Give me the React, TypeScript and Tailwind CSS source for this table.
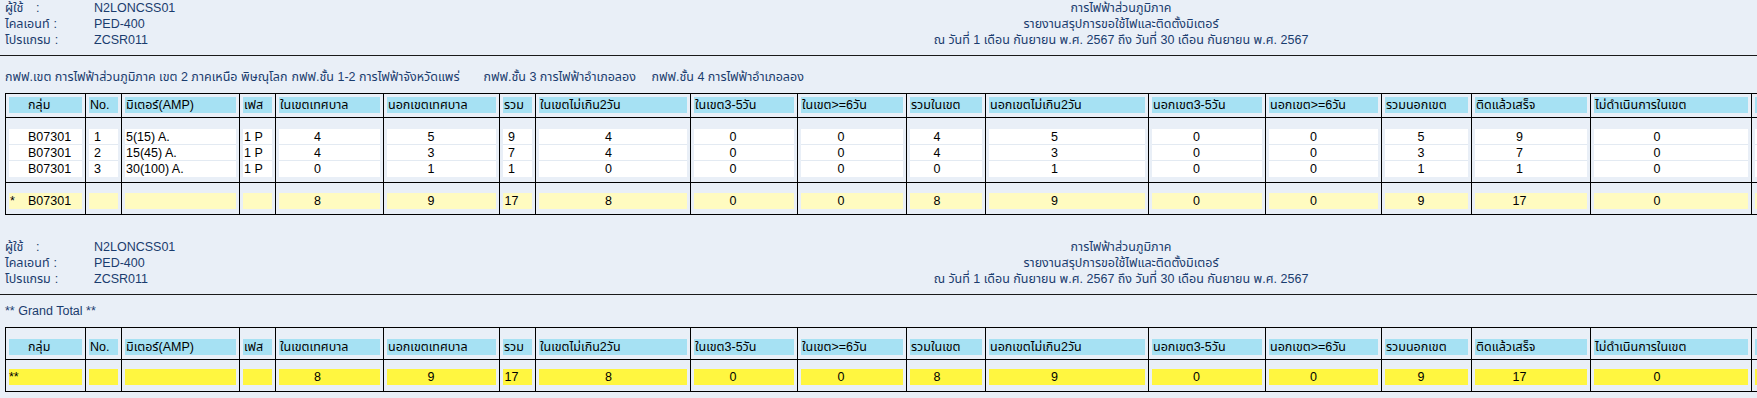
import React from 'react';

type Kind = 'group' | 'no' | 'text' | 'num';
type Col = { label: string; w: string; kind: Kind; nw?: string };

const cols: Col[] = [
  { label: 'กลุ่ม', w: 'w-[80px]', kind: 'group' },
  { label: 'No.', w: 'w-[36px]', kind: 'no' },
  { label: 'มิเตอร์(AMP)', w: 'w-[118px]', kind: 'text' },
  { label: 'เฟส', w: 'w-[36px]', kind: 'text' },
  { label: 'ในเขตเทศบาล', w: 'w-[108px]', kind: 'num', nw: 'w-[77px]' },
  { label: 'นอกเขตเทศบาล', w: 'w-[116px]', kind: 'num', nw: 'w-[88px]' },
  { label: 'รวม', w: 'w-[36px]', kind: 'num', nw: 'w-[17px]' },
  { label: 'ในเขตไม่เกิน2วัน', w: 'w-[155px]', kind: 'num', nw: 'w-[139px]' },
  { label: 'ในเขต3-5วัน', w: 'w-[107px]', kind: 'num', nw: 'w-[78px]' },
  { label: 'ในเขต>=6วัน', w: 'w-[109px]', kind: 'num', nw: 'w-[80px]' },
  { label: 'รวมในเขต', w: 'w-[79px]', kind: 'num', nw: 'w-[54px]' },
  { label: 'นอกเขตไม่เกิน2วัน', w: 'w-[163px]', kind: 'num', nw: 'w-[131px]' },
  { label: 'นอกเขต3-5วัน', w: 'w-[117px]', kind: 'num', nw: 'w-[89px]' },
  { label: 'นอกเขต>=6วัน', w: 'w-[116px]', kind: 'num', nw: 'w-[89px]' },
  { label: 'รวมนอกเขต', w: 'w-[90px]', kind: 'num', nw: 'w-[72px]' },
  { label: 'ติดแล้วเสร็จ', w: 'w-[119px]', kind: 'num', nw: 'w-[89px]' },
  { label: 'ไม่ดำเนินการในเขต', w: 'w-[161px]', kind: 'num', nw: 'w-[126px]' },
  { label: '', w: 'w-[163px]', kind: 'num', nw: 'w-[131px]' },
];

const dataRows: string[][] = [
  ['B07301', '1', '5(15) A.', '1 P', '4', '5', '9', '4', '0', '0', '4', '5', '0', '0', '5', '9', '0', ''],
  ['B07301', '2', '15(45) A.', '1 P', '4', '3', '7', '4', '0', '0', '4', '3', '0', '0', '3', '7', '0', ''],
  ['B07301', '3', '30(100) A.', '1 P', '0', '1', '1', '0', '0', '0', '0', '1', '0', '0', '1', '1', '0', ''],
];
const totalRow = ['* B07301', '', '', '', '8', '9', '17', '8', '0', '0', '8', '9', '0', '0', '9', '17', '0', ''];
const grandRow = ['**', '', '', '', '8', '9', '17', '8', '0', '0', '8', '9', '0', '0', '9', '17', '0', ''];
const headerRow = cols.map((c) => c.label);

function BandContent({ col, value, header }: { col: Col; value: string; header?: boolean }) {
  if (header) {
    return <div className={col.kind === 'group' ? 'pl-[19px]' : 'pl-[1px]'}>{value}</div>;
  }
  if (col.kind === 'group') {
    if (value === '**') return <div className="pl-0">**</div>;
    if (value.startsWith('* ')) {
      return (
        <div className="flex">
          <span className="w-[19px] pl-[1px]">*</span>
          <span>{value.slice(2)}</span>
        </div>
      );
    }
    return <div className="pl-[19px]">{value}</div>;
  }
  if (col.kind === 'no') return <div className="pl-[5px]">{value}</div>;
  if (col.kind === 'text') return <div className="pl-[1px]">{value}</div>;
  return <div className={`${col.nw} text-center`}>{value}</div>;
}

function Section({
  rows,
  bg,
  pad,
  header,
  sep,
}: {
  rows: string[][];
  bg: string;
  pad: string;
  header?: boolean;
  sep?: boolean;
}) {
  return (
    <div className="flex w-max border-b border-black">
      {cols.map((col, ci) => (
        <div key={ci} className={`${col.w} shrink-0 border-l border-black ${pad}`}>
          <div className="mx-[3px] flex flex-col">
            {rows.map((r, ri) => (
              <div
                key={ri}
                className={`h-[16px] whitespace-pre ${bg} ${
                  sep && ri < rows.length - 1 ? 'border-b border-[#e3eaf2]' : ''
                }`}
              >
                <BandContent col={col} value={r[ci]} header={header} />
              </div>
            ))}
          </div>
        </div>
      ))}
    </div>
  );
}

function ReportHeader() {
  const labels: [string, string, string][] = [
    ['ผู้ใช้', 'min-w-[31px]', 'N2LONCSS01'],
    ['ไคลเอนท์', 'min-w-[44px]', 'PED-400'],
    ['โปรแกรม', 'min-w-[46px]', 'ZCSR011'],
  ];
  const titles = [
    'การไฟฟ้าส่วนภูมิภาค',
    'รายงานสรุปการขอใช้ไฟและติดตั้งมิเตอร์',
    'ณ วันที่ 1 เดือน กันยายน พ.ศ. 2567 ถึง วันที่ 30 เดือน กันยายน พ.ศ. 2567',
  ];
  return (
    <div className="flex h-[48px] text-[#1a3c6e]">
      <div className="w-[700px] shrink-0 pl-[5px]">
        {labels.map(([l, lw, v]) => (
          <div key={l} className="flex h-[16px]">
            <div className="flex w-[89px] shrink-0 whitespace-nowrap">
              <span className={`${lw} pr-[4px]`}>{l}</span>
              <span>:</span>
            </div>
            <span>{v}</span>
          </div>
        ))}
      </div>
      <div className="w-[842px] shrink-0 text-center">
        {titles.map((t) => (
          <div key={t} className="h-[16px] whitespace-nowrap">
            {t}
          </div>
        ))}
      </div>
    </div>
  );
}

export default function App() {
  return (
    <div className="h-[398px] w-[1757px] overflow-hidden bg-[#e9eff7] text-[12.5px] leading-[16px] text-black [font-family:Tahoma,'Liberation_Sans','Noto_Sans_Thai','Noto_Sans',sans-serif]">
      {/* Block 1 */}
      <ReportHeader />
      <div className="mt-[7px] border-t border-[#1a1a1a]" />
      <div className="mt-[13px] flex h-[16px] whitespace-nowrap pl-[5px] text-[#1a3c6e]">
        <span className="min-w-[286px] shrink-0 pr-[4px]">กฟฟ.เขต การไฟฟ้าส่วนภูมิภาค เขต 2 ภาคเหนือ พิษณุโลก</span>
        <span className="min-w-[192px] shrink-0 pr-[4px]">กฟฟ.ชั้น 1-2 การไฟฟ้าจังหวัดแพร่</span>
        <span className="min-w-[168px] shrink-0 pr-[4px]">กฟฟ.ชั้น 3 การไฟฟ้าอำเภอลอง</span>
        <span>กฟฟ.ชั้น 4 การไฟฟ้าอำเภอลอง</span>
      </div>
      <div className="ml-[5px] mt-[8px] w-max border-t border-black">
        <Section rows={[headerRow]} bg="bg-[#a6e1f3]" pad="pt-[3px] pb-[4px]" header />
        <Section rows={dataRows} bg="bg-white" pad="pt-[11px] pb-[5px]" sep />
        <Section rows={[totalRow]} bg="bg-[#fffbc0]" pad="pt-[10px] pb-[5px]" />
      </div>

      {/* Block 2 */}
      <div className="mt-[24px]">
        <ReportHeader />
      </div>
      <div className="mt-[7px] border-t border-[#1a1a1a]" />
      <div className="mt-[8px] h-[16px] whitespace-pre pl-[5px] text-[#1a3c6e]">** Grand Total **</div>
      <div className="ml-[5px] mt-[8px] w-max border-t border-black">
        <Section rows={[headerRow]} bg="bg-[#a6e1f3]" pad="pt-[11px] pb-[4px]" header />
        <Section rows={[grandRow]} bg="bg-[#fff640]" pad="pt-[9px] pb-[6px]" />
      </div>
    </div>
  );
}
